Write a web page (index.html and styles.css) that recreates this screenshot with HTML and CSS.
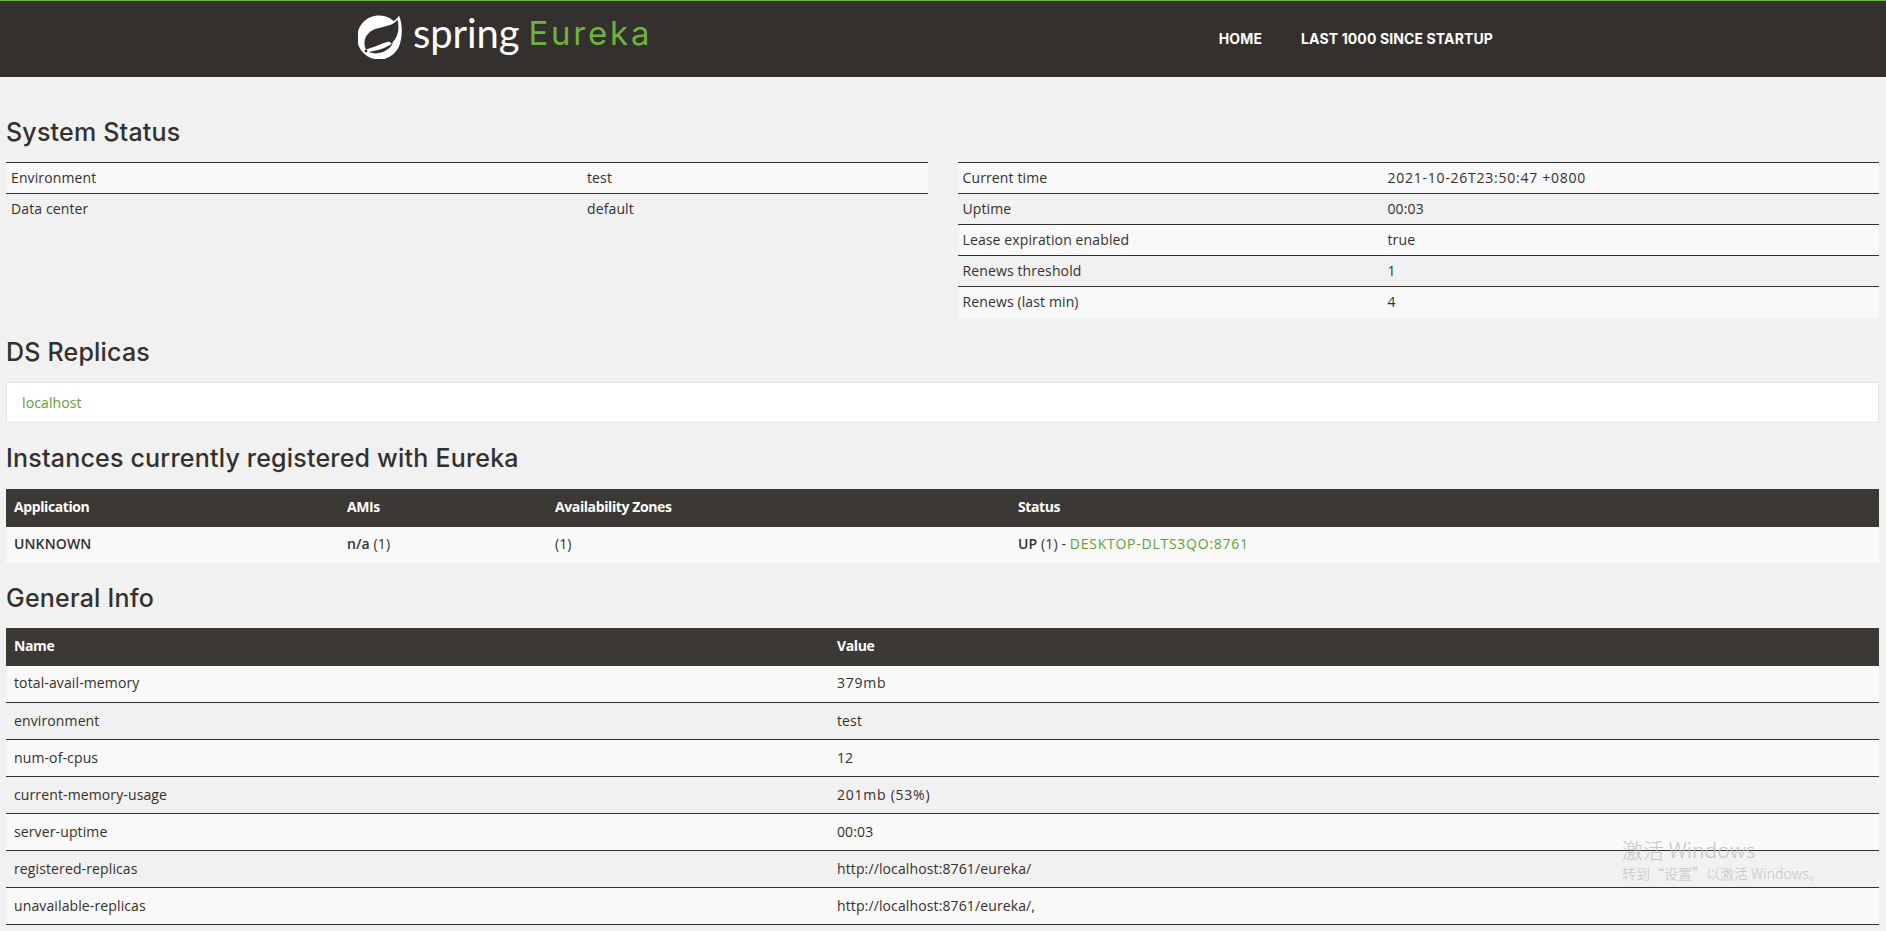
FILE: index.html
```html
<!DOCTYPE html>
<html lang="en">

<head>
    <meta charset="UTF-8">
    <title>Eureka</title>
    <link rel="stylesheet" href="styles.css">
</head>

<body>
    <nav class="navbar">
        <a class="brand" href="#">
            <svg class="leaf" viewBox="0 0 46 46" width="46" height="46">
                <path fill="#fff" d="M41 2.5C39.5 5 37.5 6.6 35.6 8A22 22 0 1 0 40.6 34.5C44.6 25 45 12 41 2.5Z" />
                <path fill="#34302d" d="M8.2 36.5C3.6 27.4 9 18 19 15.4C27 13.3 34.5 13 39.4 6.8C42.6 17 38.5 26.8 33 31C32 25.6 25 31.6 8.2 36.5Z" />
                <path fill="#34302d" d="M11 39C20 37.6 29 35 35.4 29.6C31.6 36.6 25 40.4 18 40.4C15.6 40.4 13 40 11 39Z" />
                <circle fill="#34302d" cx="8" cy="38" r="1.4" />
            </svg>
            <span class="spring">spring</span>
            <span class="eureka">Eureka</span>
        </a>
        <ul class="nav-links">
            <li><a href="#">HOME</a></li>
            <li><a href="#">LAST 1000 SINCE STARTUP</a></li>
        </ul>
    </nav>

    <div class="container">
        <h1 class="first">System Status</h1>
        <div class="status-row">
            <table class="info stripes">
                <colgroup><col class="c-env"><col></colgroup>
                <tr><td>Environment</td><td>test</td></tr>
                <tr><td>Data center</td><td>default</td></tr>
            </table>
            <table class="info stripes">
                <colgroup><col class="c-time"><col></colgroup>
                <tr><td>Current time</td><td class="wide">2021-10-26T23:50:47 +0800</td></tr>
                <tr><td>Uptime</td><td>00:03</td></tr>
                <tr><td>Lease expiration enabled</td><td>true</td></tr>
                <tr><td>Renews threshold</td><td>1</td></tr>
                <tr><td>Renews (last min)</td><td>4</td></tr>
            </table>
        </div>

        <h1 class="replicas-title">DS Replicas</h1>
        <div class="well"><a href="#">localhost</a></div>

        <h1 class="instances-title">Instances currently registered with Eureka</h1>
        <table class="data">
            <colgroup><col class="c-app"><col class="c-ami"><col class="c-zone"><col></colgroup>
            <thead>
                <tr><th>Application</th><th>AMIs</th><th>Availability Zones</th><th>Status</th></tr>
            </thead>
            <tbody>
                <tr>
                    <td><b>UNKNOWN</b></td>
                    <td><b>n/a</b> (1)</td>
                    <td>(1)</td>
                    <td><b>UP</b> (1) - <a class="wide" href="#">DESKTOP-DLTS3QO:8761</a></td>
                </tr>
            </tbody>
        </table>

        <h1 class="general-title">General Info</h1>
        <table class="data lined">
            <colgroup><col class="c-name"><col></colgroup>
            <thead>
                <tr><th>Name</th><th>Value</th></tr>
            </thead>
            <tbody>
                <tr><td>total-avail-memory</td><td class="wide">379mb</td></tr>
                <tr><td>environment</td><td>test</td></tr>
                <tr><td>num-of-cpus</td><td>12</td></tr>
                <tr><td>current-memory-usage</td><td class="wide">201mb (53%)</td></tr>
                <tr><td>server-uptime</td><td>00:03</td></tr>
                <tr><td>registered-replicas</td><td>http://localhost:8761/eureka/</td></tr>
                <tr><td>unavailable-replicas</td><td>http://localhost:8761/eureka/,</td></tr>
            </tbody>
        </table>
    </div>

    <div class="watermark">
        <div class="wm-big">激活 Windows</div>
        <div class="wm-small">转到“设置”以激活 Windows。</div>
    </div>
</body>

</html>
```

FILE: styles.css
```css
html,
body {
    height: 931px;
    overflow: hidden;
}

body {
    margin: 0;
    background-color: #f1f1f1;
    color: #34302d;
    font-family: "Open Sans", "Noto Sans", sans-serif;
    font-size: 14px;
    letter-spacing: 0.12px;
    position: relative;
}

a {
    color: #5fa134;
    text-decoration: none;
}

.navbar {
    box-sizing: border-box;
    height: 77px;
    background-color: #34302d;
    border-top: 1px solid #6db33f;
    display: flex;
    justify-content: space-between;
    padding: 0 393px 0 358px;
}

.brand {
    display: flex;
    align-items: flex-start;
    padding-top: 12px;
}

.leaf {
    flex: none;
}

.spring {
    color: #fff;
    font-family: Lato, sans-serif;
    font-size: 40px;
    line-height: 40px;
    margin-left: 9px;
    letter-spacing: -0.1px;
}

.eureka {
    color: #6db33f;
    font-family: Inter, sans-serif;
    font-size: 33px;
    line-height: 40px;
    margin-left: 9px;
    letter-spacing: 2.8px;
}

.nav-links {
    list-style: none;
    margin: 0;
    padding: 0;
    display: flex;
    gap: 39px;
    align-items: center;
    height: 76px;
}

.nav-links a {
    color: #fff;
    font-family: Inter, sans-serif;
    font-size: 14px;
    font-weight: 700;
    letter-spacing: 0.12px;
    position: relative;
    top: -1px;
}

.container {
    padding: 0 6px;
    margin-right: 1px;
}

h1 {
    font-family: Inter, sans-serif;
    font-size: 25px;
    font-weight: 500;
    letter-spacing: 0.2px;
    line-height: 30px;
    margin: 0;
}

.first {
    padding-top: 40px;
    padding-bottom: 15px;
}

.status-row {
    display: flex;
    gap: 30px;
}

table {
    border-collapse: collapse;
    table-layout: fixed;
    width: 100%;
}

.info {
    flex: 1;
    align-self: flex-start;
}

.info td {
    padding: 0 5px 2px;
    box-sizing: border-box;
    height: 31px;
    border-top: 1px solid #34302d;
}

.stripes tr:nth-child(odd) td {
    background-color: #f9f9f9;
}

.wide {
    letter-spacing: 0.75px;
}

.c-env {
    width: 576px;
}

.c-time {
    width: 425px;
}

.replicas-title {
    padding-top: 19px;
    padding-bottom: 15px;
}

.well {
    box-sizing: border-box;
    height: 41px;
    background-color: #fff;
    border: 1px solid #e3e3e3;
    padding: 10px 15px;
    line-height: 19px;
}

.instances-title {
    padding-top: 20px;
    padding-bottom: 16px;
}

.data th {
    height: 38px;
    padding: 0 8px 3px;
    box-sizing: border-box;
    background-color: #3c3834;
    color: #fff;
    text-align: left;
    font-weight: 700;
    letter-spacing: -0.4px;
}

.data td {
    height: 36px;
    padding: 0 8px 2px;
    box-sizing: border-box;
    background-color: #f9f9f9;
}

.data b {
    font-weight: 600;
}

.c-app {
    width: 333px;
}

.c-ami {
    width: 208px;
}

.c-zone {
    width: 463px;
}

.c-name {
    width: 823px;
}

.general-title {
    padding-top: 20px;
    padding-bottom: 15px;
}

.lined td {
    height: 37px;
    border-bottom: 1px solid #34302d;
}

.lined tbody tr:nth-child(even) td {
    background-color: transparent;
}

.watermark {
    position: absolute;
    left: 1622px;
    top: 836px;
    color: #c4c4c4;
    font-family: "Noto Sans CJK SC", sans-serif;
    font-weight: 300;
    letter-spacing: 0;
}

.wm-big {
    font-size: 21px;
    line-height: 27px;
}

.wm-small {
    font-size: 14px;
    line-height: 20px;
}
```
